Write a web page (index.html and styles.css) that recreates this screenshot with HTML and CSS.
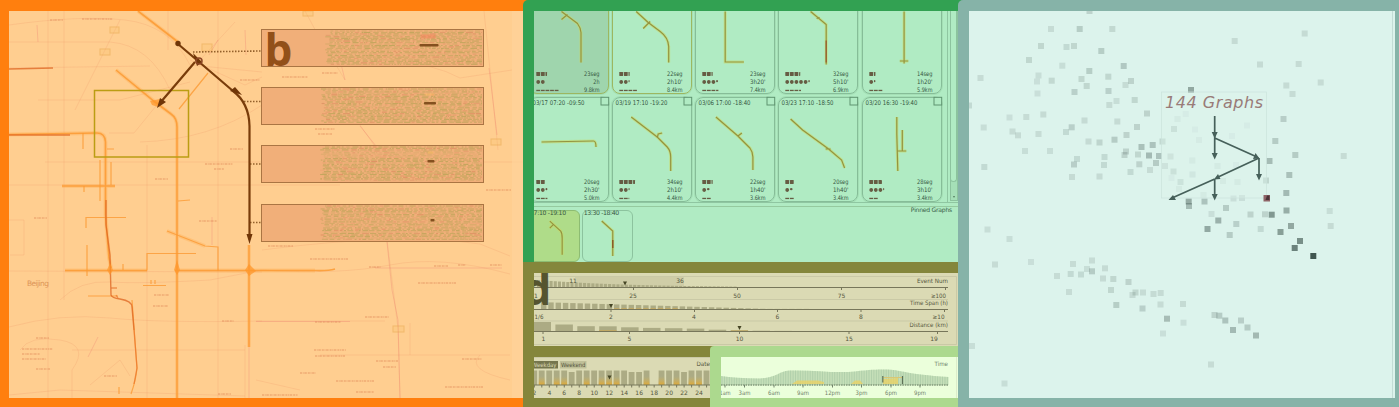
FILE: index.html
```html
<!DOCTYPE html>
<html lang="en">
<head>
<meta charset="utf-8">
<title>Traffic jam graphs</title>
<link rel="stylesheet" href="styles.css">
</head>
<body>
<main class="dashboard">
  <section class="panel map-panel">
    <svg class="canvas" viewBox="9 11 514 387">
      <g class="roads-faint">
        <path d="M9 25Q80 15 125 20T190 65L262 72M9 42H110Q150 45 170 90M9 68L150 66M38 100H120L190 82M45 162H523M9 185H340M48 11V398M64 11V300M120 20L75 110M168 11V50M147 145V398M218 11V398M9 271L262 272M9 327Q60 313 110 318T262 321M72 350H245M9 395L60 390 245 396M245 345V398M109 133H134L156 106M190 60L245 85 262 77M140 142Q210 140 262 105M60 300Q80 280 110 282T210 280L262 270Q340 275 390 265T510 274M262 250Q400 232 480 244L510 256M256 321H385M320 355H510M256 380L300 390M410 323V355M9 220H24V255H10M200 60L235 22M20 350Q30 335 60 340T72 370V398M305 11L318 35 345 80M360 125L388 165M387 240L398 328 400 398M484 11L490 70 498 150M262 60Q410 50 460 78L512 70M90 385L120 360 130 376M480 355Q465 370 510 380"/>
      </g>
      <g class="roads-red">
        <path d="M340 60L345 80M360 126L376 146M387 242L392 290 398 320 400 398M489 68L497 135M256 321.500H350M375 268H502M212 217V245M249 340V398M245 30L246 55M209 55L218 40M37 25L38 42M88 357L98 337"/>
      </g>
      <text class="city" x="27" y="286" textLength="22">Beijing</text>
      <g id="map-marks"></g>
      <g class="places">
        <rect x="110" y="27" width="9" height="6"/><rect x="100" y="49" width="10" height="6"/><rect x="202" y="44" width="10" height="7"/><rect x="393" y="326" width="11" height="6"/><rect x="491" y="139" width="10" height="6"/><rect x="303" y="11" width="10" height="5"/>
      </g>
      <g class="road glow">
        <path d="M138 11L178 42M116 70L155 102 171 114Q177 118 177 127V398M9 134.500L97 133Q105 133 105.500 142V215L109 258 111 268M62 186H115M65 270.500H147M175 270.500H315M249 245V347M167 231L205 246"/>
      </g>
      <g class="road">
        <path d="M138 11L178 42M116 70L155 102 171 114Q177 118 177 127V398M9 134.500L97 133Q105 133 105.500 142V215L109 258 111 268M62 186H115M65 270.500H147M175 270.500H315Q328 271 335 269M249 245V347"/>
      </g>
      <g class="road thin">
        <path d="M147 270.500V253.500H196M167 231L205 246 218 247V271M87 245V276M86 228V217.500H126M179 109L208 73M132 300L137 368Q136 380 131 394M88 296H118M143 285.500H166M151 284V280M155 284V280M84 186V192M100 160V201M111 162V185M83 133V149M107 149H114M119 394V387M178 201L190 200M123 270V264"/>
      </g>
      <path class="road-deep" d="M9 69L53 68M9 135H70M106 200V225L110 255 111 295Q112 298 120 299 132 301 132 307L134 330"/>
      <path class="road-warm" d="M134 330L137 368 134 384M111 288H117M116 295L118 298"/>
      <path class="hot" d="M150 101L160 99 158 107 152 105ZM177 260L180 270 177 275 174 270ZM245 270L249 264 256 271 249 276ZM110 263L113 270 110 275 107 270Z"/>
      <rect class="selection" x="94.500" y="90.500" width="94" height="66.500"/>
      <g class="leader">
        <path d="M193 52L261 51M244 101.500H261M250 164H261M250 222.500H261"/>
      </g>
      <path class="route" d="M178 44L198 61 233 91Q249 103 249.500 126V238M195 62L160 103"/>
      <path class="route-tip" d="M157 108L160 98 166 102ZM242 95L230 91 235 87ZM246.500 234H252.500L249.500 244ZM193 53L202 62 197 66Z"/>
      <circle class="route-tip" cx="178" cy="43.500" r="2.700"/>
      <circle class="route-node" cx="199" cy="61" r="3"/>
      <g id="timelines"></g>
      <text class="letter letter-b" x="264.500" y="66">b</text>
      <path d="M512 11H523V398H512Z" fill="#ffd49d" opacity=".6"/>
    </svg>
  </section>

  <div class="middle">
    <section class="panel list-panel">
      <div class="list-row">
        <div class="cards" id="cards"></div>
        <div class="scrollbar"><span class="thumb"></span><span class="arrow"></span></div>
      </div>
      <div class="pinned">
        <div class="pin-card is-active">
          <svg viewBox="528 210 52 52"><text x="529" y="215" textLength="36.500">17:10 -19:10</text><path class="g-halo" d="M549 221L560 231Q561.500 233 561.500 238V255M549 228L553 224"/><path class="g-line" d="M549 221L560 231Q561.500 233 561.500 238V255M549 228L553 224"/></svg>
        </div>
        <div class="pin-card">
          <svg viewBox="581.500 210 51 52"><text x="583" y="215" textLength="35.500">13:30 -18:40</text><path class="g-halo" d="M601 221L612 231V256"/><path class="g-line" d="M601 221L612 231V256"/><path d="M612 240V248" stroke="#8a5a28" stroke-width="1.500"/></svg>
        </div>
        <span class="pinned-title">Pinned Graphs</span>
      </div>
    </section>

    <section class="panel filter-panel">
      <div class="filters"><svg viewBox="534 273 424 73" id="filters"></svg></div>
      <div class="filter-bottom">
        <div class="date"><svg viewBox="534 357 176 41" id="dates"></svg></div>
        <div class="time"><svg viewBox="721 357 237 41" id="times"></svg></div>
      </div>
    </section>
  </div>

  <section class="panel scatter-panel">
    <svg class="canvas" viewBox="969 11 426 387">
      <path d="M1392.500 11V398" stroke="#c3ddd6"/>
      <g id="points"></g>
      <rect class="hint" x="1161.500" y="92" width="105" height="106"/>
      <text class="graphs-title" x="1165" y="108" textLength="98">144 Graphs</text>
      <g class="arrows">
        <path d="M1214.700 116V154M1214.700 138L1257 157M1259 158V176M1259 158L1216 178M1214.700 179L1172 198M1214.700 179V196"/>
        <path class="tip" d="M1211.700 132H1217.700L1214.700 138.500ZM1211.700 153H1217.700L1214.700 159.500ZM1256 174H1262L1259 180.500ZM1211.700 194H1217.700L1214.700 200.500ZM1255.500 153L1259.500 158.500 1253 159ZM1218 174L1220.500 179 1214 179.500ZM1173 195L1176 200 1168.500 200Z"/>
      </g>
      <path d="M1263.500 195H1270V201.500H1263.500Z" fill="#8f6467"/><path d="M1267 195.500H1269.500V200H1265.500Z" fill="#4c3438"/>
    </svg>
  </section>
</main>
<script src="script.js"></script>
</body>
</html>
```

FILE: styles.css
```css
* { box-sizing: border-box; }

body {
  margin: 0;
  width: 1399px;
  height: 407px;
  overflow: hidden;
  background: #ff7f0e;
  font-family: "DejaVu Sans", sans-serif;
}

svg { display: block; width: 100%; height: 100%; }

.dashboard {
  display: grid;
  grid-template-columns: 523px 435px 441px;
  height: 407px;
}

.panel { overflow: hidden; }

.map-panel { padding: 11px 0 9px 9px; background: #ff7f0e; }
.map-panel .canvas { background: #ffce90; }

.roads-faint path { fill: none; stroke: #e88a60; stroke-width: .8; opacity: .24; }
.roads-red path { fill: none; stroke: #e8746a; stroke-width: 1; opacity: .28; }
.city { font-size: 7.5px; fill: #cf7d42; opacity: .7; }
.places rect { fill: #f8c05e; fill-opacity: .4; stroke: #e7a548; opacity: .5; }
.road path { fill: none; stroke: #fb9a33; stroke-width: 1.6; opacity: .85; }
.road.thin path { stroke-width: 1.2; opacity: .8; }
.road.glow path { stroke: #ffa43d; stroke-width: 3.800; opacity: .28; }
.road-deep { fill: none; stroke: #dd6420; stroke-width: 1.400; opacity: .75; }
.road-warm { fill: none; stroke: #e8702a; stroke-width: 1.300; opacity: .65; }
.hot { fill: #ff9528; opacity: .7; }
.selection { fill: none; stroke: #bb9d13; stroke-width: 1.500; }
.leader path { fill: none; stroke: #93602a; stroke-width: 1.600; stroke-dasharray: 1.500 1.500; }
.route { fill: none; stroke: #793c0a; stroke-width: 2.200; }
.route-tip { fill: #703608; }
.route-node { fill: none; stroke: #8b4524; stroke-width: 1.500; }
.timeline { fill: #f1af79; stroke: #aa7543; stroke-width: 1; }
.letter { font-family: "Open Sans", "Noto Sans", sans-serif; font-weight: 700; font-size: 44px; }
.letter-b { fill: #925019; }
.letter-d { fill: #55542f; }

.middle {
  display: grid;
  grid-template-rows: 262px 145px;
  background: linear-gradient(#ff7f0e 0 180px, #84863b 180px);
}

.list-panel {
  display: grid;
  grid-template-rows: 192px 59px;
  padding: 11px 0 0 11px;
  background: #32a152;
  border-top-left-radius: 5px;
}

.list-row {
  display: flex;
  overflow: hidden;
  background: #b0ebc3;
  border-bottom: 1px solid #8fc6a1;
}

.cards {
  display: grid;
  flex: none;
  grid-template-columns: repeat(5, 80px);
  grid-auto-rows: 105px;
  gap: 3.500px 3.300px;
  margin: -22.500px 0 0 -5.500px;
  height: 214px;
  width: 419px;
  border-right: 1px solid #8fc6a1;
}

.card {
  border: 1px solid #86bd98;
  border-radius: 8px;
  box-shadow: 0 0 0 1px #a4dfb5;
}
.card.is-warm { border-color: #9cb760; }
.card.is-selected { background: #9fd5ad; }
.card svg, .pin-card svg { margin: -1px; width: calc(100% + 2px); height: calc(100% + 2px); overflow: visible; }
.card text, .pin-card text { font-size: 6.200px; fill: #35563f; }
.card .title { font-size: 6.400px; }
.marks { fill: #665c43; }
.checkbox { fill: #b0ebc3; stroke: #5f9470; stroke-width: 1; }
.g-halo { fill: none; stroke: #cbd860; stroke-width: 3; opacity: .55; }
.g-line { fill: none; stroke: #94933f; stroke-width: 1.200; }

.scrollbar {
  display: flex;
  flex-direction: column;
  align-items: center;
  justify-content: space-between;
  width: 8px;
  margin-left: 2px;
  height: 190px;
  padding-bottom: 1px;
  border: 1px solid #8cc39e;
  border-top: 0;
  background: #a5dfb7;
}
.thumb { width: 7px; height: 171px; background: #b0ebc3; border: 1px solid #8cc39e; border-top: 0; border-radius: 0 0 4px 4px; }
.arrow { border: 1.500px solid transparent; border-top: 2px solid #547c60; }

.pinned {
  display: flex;
  gap: 1.500px;
  padding-top: 6.500px;
  overflow: hidden;
  background: linear-gradient(#b0ebc3 3px, #95ca9f 3px 4px, #b0ebc3 4px);
}
.pin-card { flex: none; width: 51.500px; height: 52px; border: 1px solid #8cc39e; border-radius: 6px; }
.pin-card.is-active { margin-left: -5.500px; background: #afdc89; border-color: #8dbc72; }
.pinned-title {
  margin: -4px 6px 0 auto;
  font-size: 6.100px;
  line-height: 8px;
  color: #3a5f47;
  height: 8px;
  white-space: nowrap;
  letter-spacing: -.25px;
}

.filter-panel {
  display: grid;
  grid-template-rows: 73px 61px;
  padding: 11px 0 0 11px;
  background: #84863b;
  border-top-left-radius: 7px;
}
.filters { background: #dbdab4; }
.filter-bottom { display: grid; grid-template-columns: 176px 248px; }
.date { height: 41px; margin-top: 11px; background: #dbdab4; }
.time { padding: 11px 0 9px 11px; background: #acd98e; border-top-left-radius: 4px; }
.time svg { background: #ebffdb; }
.tick-label { font-size: 6px; fill: #55563d; text-anchor: middle; }
.caption { font-size: 6px; fill: #55563d; }
.axis { stroke: #77765a; stroke-width: 1; fill: none; }
.rule { stroke: #c3c2a1; stroke-width: .7; fill: none; }
.bar { fill: #acab84; }
.bar-warm { fill: #c9a959; }
.pointer { fill: #454524; }
.badge { fill: #74754d; }
.badge-light { fill: #bfbf98; }
.badge-text { font-size: 6px; fill: #d9d8b2; }
.time .tick-label, .time .caption { fill: #71836a; }
.area { fill: #c5dfb8; }
.area-lines { stroke: #a3c6a2; stroke-width: .6; fill: none; }
.jam { fill: #e8d266; opacity: .8; }
.bracket { stroke: #5e7157; stroke-width: 1.200; fill: none; }

.scatter-panel {
  padding: 11px 4px 9px 11px;
  background: #86b3a8;
  border-top-left-radius: 5px;
}
.scatter-panel .canvas { background: #dcf3ec; }
.graphs-title { font-size: 16px; font-style: italic; fill: #997b78; }
.hint { fill: #dcf3ec; fill-opacity: .35; stroke: #cbe3dc; stroke-width: .7; }
.arrows path { fill: none; stroke: #46605a; stroke-width: 1.700; }
.arrows .tip { fill: #46605a; stroke: none; }

.dashboard { background: linear-gradient(90deg, transparent 940px, #32a152 940px); }
```

FILE: script.js
```js
let seed = 7;
const rand = () => (seed = (seed * 16807) % 2147483647) / 2147483647;
const byId = (id) => document.getElementById(id);

/* Timeline strips over the map: speed rows drawn as noisy dashes */
let strips = '';
[[29.5, 325, 429, 45.5, 19], [87.5, 321, 430, 103.5, 12], [145.5, 320, 431, 161.5, 7], [204.5, 320, 432.5, 220.5, 4]].forEach(([y, start, cx, cy, w], i) => {
  strips += `<rect class="timeline" x="261.500" y="${y}" width="222" height="37"/>`;
  for (let r = 1.5; r < 36; r += 1.45) {
    const density = rand() > .25 ? .32 : .1;
    for (let x = start + rand() * 6; x < 481; x += .5 + rand() * 2.5) {
      const len = Math.min(1 + rand() * 6, 482 - x);
      const tone = rand() > .12 ? '#a6a04a' : '#d38257';
      strips += `<path d="M${x.toFixed(1)} ${(y + r).toFixed(1)}h${len.toFixed(1)}" stroke="${tone}" stroke-width="1.100" opacity="${(density + rand() * .28).toFixed(2)}"/>`;
      x += len;
    }
  }
  if (i < 3) strips += `<path d="M${cx - w * .45} ${cy - 9}h${w * .8}" stroke="${i ? '#ffbe65' : '#f4805a'}" stroke-width="${i ? 2 : 4}" opacity=".5"/>`;
  strips += `<rect x="${cx - w / 2}" y="${cy - 1.5}" width="${w}" height="2.600" rx=".8" fill="#84501f"/>`;
});
byId('timelines').innerHTML = strips;

/* Small unlabelled place marks */
byId('map-marks').innerHTML = [[50, 20, 13], [82, 19, 31], [22, 349, 31], [22, 354, 18], [22, 359, 24], [36, 338, 13], [36, 369, 14], [104, 376, 13], [34, 218, 13], [199, 221, 18], [222, 321, 12], [154, 295, 15], [153, 306, 15], [218, 394, 13], [205, 164, 28], [214, 169, 10], [230, 149, 13], [240, 80, 20], [155, 179, 13], [282, 77, 26], [322, 73, 16], [315, 129, 20], [318, 134, 14], [310, 259, 39], [365, 317, 24], [418, 283, 38], [315, 322, 26], [314, 350, 32], [315, 356, 30], [376, 361, 22], [383, 367, 13], [336, 381, 38], [356, 392, 18], [445, 387, 39], [462, 359, 20], [300, 373, 16], [262, 395, 36], [486, 190, 25], [268, 246, 25], [434, 266, 14], [458, 265, 8], [490, 265, 12], [369, 267, 12]]
  .map(([x, y, w]) => `<path d="M${x} ${y}h${w}" stroke="#df8556" stroke-width="2" stroke-dasharray="2 .7 1 .6 2.500 1" opacity=".36"/>`).join('');

/* Graph cards */
const cards = [
  { s: [2.4, 2, 5], t: ['23seg', '2h', '9.8km'], d: 'M561 11L577 23Q580 27 580.500 32V62M561 19L567 14', c: 'is-warm is-selected' },
  { s: [2.3, 2.3, 4], t: ['22seg', "2h10'", '8.4km'], d: 'M636 11L648 22 660 31Q668 37 668.500 46V62M643 28L650 21', c: 'is-warm' },
  { s: [2.3, 3.5, 3.6], t: ['23seg', "3h20'", '7.4km'], d: 'M725.300 11V61.500H744' },
  { s: [3.3, 5.4, 3.5], t: ['32seg', "5h10'", '6.9km'], d: 'M811 11L826.600 24V64M817 18L820 17', hot: 'M826.600 40V62' },
  { s: [1.4, 1.4, 3], t: ['14seg', "1h20'", '5.9km'], d: 'M903.800 11V63M899.500 60.500H908' },
  { s: [2, 2.5, 2.5], t: ['20seg', "2h30'", '5.0km'], n: '03/17 07:20 -09:50', d: 'M541 142L593 141Q595.500 141 595.500 147' },
  { s: [3.5, 2.3, 2.2], t: ['34seg', "2h10'", '4.4km'], n: '03/19 17:10 -19:20', d: 'M631 117L657 137 667 147Q670.500 151 670.500 157V171M657 138L658 134 662 133' },
  { s: [2.3, 1.7, 2], t: ['22seg', "1h40'", '3.6km'], n: '03/06 17:00 -18:40', d: 'M716 117L738 136 750 148Q753 152 753 157V170M738 136L742 133' },
  { s: [2, 1.7, 2], t: ['20seg', "1h40'", '3.4km'], n: '03/23 17:10 -18:50', d: 'M791 119L803 130 829 149 842 160 845 168M826 149L831 149' },
  { s: [2.9, 3.3, 2], t: ['28seg', "3h10'", '3.4km'], n: '03/20 16:30 -19:40', d: 'M896.500 117V134L897.500 171M902 130V151M897 151H906' },
];
byId('cards').innerHTML = cards.map((card, i) => {
  const x0 = 528.5 + (i % 5) * 83.3;
  const y0 = i < 5 ? -11.5 : 97;
  let marks = '';
  card.s.forEach((count, row) => {
    for (let k = 0; k < count; k++) {
      const part = Math.min(1, count - k);
      const x = x0 + 7.3 + k * 4.6;
      const y = y0 + 84.8 + row * 8;
      if (row === 2) marks += `<rect x="${x}" y="${y}" width="${3.8 * part}" height="1.300"/>`;
      else marks += `<rect x="${x}" y="${y - 1.7}" width="${3.8 * part}" height="${row && part < 1 ? 2.2 : 3.8}" rx="${row ? 1.8 : .4}"/>`;
    }
  });
  const stats = card.t.map((t, row) => `<text x="${x0 + 70.5 - t.length * 3.1}" y="${y0 + 87 + row * 8}" textLength="${t.length * 3.1}" lengthAdjust="spacingAndGlyphs">${t}</text>`).join('');
  const head = card.n ? `<text class="title" x="${x0 + 3.5}" y="${y0 + 8}" textLength="52" lengthAdjust="spacingAndGlyphs">${card.n}</text>` : '';
  return `<div class="card ${card.c || ''}"><svg viewBox="${x0} ${y0} 80 105">
    <path class="g-halo" d="${card.d}"/><path class="g-line" d="${card.d}"/>${card.hot ? `<path d="${card.hot}" stroke="#985b31" stroke-width="1.300"/>` : ''}
    ${head}<rect class="checkbox" x="${x0 + 72}" y="${y0 + .3}" width="7.700" height="7.700"/><g class="marks">${marks}</g>${stats}</svg></div>`;
}).join('');

/* Histogram filters */
const label = (x, y, t, w) => `<text class="tick-label" x="${x}" y="${y}"${w ? ` textLength="${w}" lengthAdjust="spacingAndGlyphs"` : ''}>${t}</text>`;
const caption = (x, y, t, w) => `<text class="caption" x="${x}" y="${y}" textLength="${w}" lengthAdjust="spacingAndGlyphs">${t}</text>`;
const pointer = (x, y) => `<path class="pointer" d="M${x - 2} ${y}h4l-2 4z"/>`;
const bar = (x, base, w, h, cls = 'bar') => `<rect class="${cls}" x="${x}" y="${base - h}" width="${w}" height="${h}"/>`;

let f = '<path class="rule" d="M534 276.500H956.500V344.500H534M534 299.500H948M534 321H948"/><rect x="575" y="277" width="109" height="10" fill="#cfcda7"/>';
for (let i = 0; i < 48; i++) f += bar(537 + i * 4.18, 287.5, 3.1, Math.max(.8, 7.5 * Math.exp(-i / 22)));
for (let i = 0; i < 37; i++) f += bar(541 + i * 7.3, 309.5, 5.4, Math.max(.6, 7.3 - i * .22));
for (let i = 10; i < 19; i++) f += bar(541 + i * 7.3, 309.5, 5.4, 1.2, 'bar-warm');
[9.5, 7, 5.3, 5.2, 4.2, 3.6, 3.3, 2.9, 1.8, 1.3, .8, .6].forEach((h, i) => { f += bar(533.5 + i * 21.9, 331.5, 17.5, h); });
f += bar(599, 331.5, 17.5, 1.2, 'bar-warm') + bar(731, 331.5, 17, 1, 'bar-warm');
f += '<path class="axis" d="M534 287.500H948M633.500 287.500V290M737.500 287.500V290M841.500 287.500V290M945.500 287.500V290M534 309.500H948M611 309.500V312M694.500 309.500V312M777.500 309.500V312M861 309.500V312M944.500 309.500V312M534 331.500H948M543 331.500V334M629.500 331.500V334M739.500 331.500V334M849 331.500V334M937.500 331.500V334"/>';
[[573, 283, '11'], [680, 283, '36'], [633, 297.5, '25'], [737, 297.5, '50'], [841.5, 297.5, '75'], [938.5, 297.5, '≥100', 15], [536, 297.5, '1'],
 [539, 319, '1/6', 9], [611, 319, '2'], [694, 319, '4'], [777.5, 319, '6'], [861, 319, '8'], [938.5, 319, '≥10', 12],
 [543.5, 341.3, '1'], [629.5, 341.3, '5'], [739.5, 341.3, '10'], [849, 341.3, '15'], [934, 341.3, '19']].forEach((a) => { f += label(...a); });
f += caption(917, 283, 'Event Num', 31) + caption(910, 305.3, 'Time Span (h)', 38) + caption(909.5, 327, 'Distance (km)', 38.5);
f += pointer(625, 281.5) + pointer(611, 304) + pointer(739.5, 326);
f += '<text class="letter letter-d" x="523.500" y="305">d</text>';
byId('filters').innerHTML = f;

/* Day-of-month histogram */
let d = '<defs><linearGradient id="warm" x2="0" y2="1"><stop offset=".2" stop-color="#c9b56a" stop-opacity="0"/><stop offset=".9" stop-color="#d9ab43"/></linearGradient></defs><path class="rule" d="M534 357.500H710"/>';
for (let day = 2; day <= 25; day++) {
  const x = 549.3 + (day - 4) * 7.49 - 3;
  const h = day === 18 ? 0 : [7, 15, 16, 22].includes(day) ? 13 : 14.5;
  d += bar(x, 385, 5.8, h);
  if ([3, 5, 6, 9, 11, 12, 13, 17, 19, 21, 23, 24].includes(day)) d += `<rect x="${x}" y="374" width="5.800" height="11" fill="url(#warm)"/>`;
  d += `<path class="axis" d="M${x + 3} 385v2.500"/>`;
  if (day % 2 === 0) d += label(x + 3, 394.7, day);
}
d += '<path class="axis" d="M534 385H710"/><rect class="badge" x="530" y="361" width="28" height="7.500"/><rect class="badge-light" x="560" y="361" width="26.500" height="7.500"/>';
d += '<text class="badge-text" x="532" y="366.800" textLength="24.500" lengthAdjust="spacingAndGlyphs">Weekday</text>' + caption(561, 366.8, 'Weekend', 24.5) + caption(696.5, 366.3, 'Date', 13.5) + pointer(609.5, 375.5);
byId('dates').innerHTML = d;

/* Time-of-day area */
const curve = 'M721 376Q735 378 760 378.500C780 377 778 370.500 792 370.500C815 370 835 373.500 855 371.500S880 369.500 891 369.700C905 371 905 374 948.500 377V385H721Z';
let lines = '';
for (let x = 722; x < 949; x += 2.45) lines += `M${x.toFixed(1)} 368V385`;
let t = `<clipPath id="under"><path d="${curve}"/></clipPath><path class="area" d="${curve}"/>
  <path class="area-lines" clip-path="url(#under)" d="${lines}"/>
  <path class="jam" d="M792 384L797 380.500H818L824 382V384ZM851 384L855 380.500H860L863 384ZM883 384V379L898 378V384Z"/>
  <path d="M721 385H948.500" stroke="#83997b" stroke-width="1.500" stroke-dasharray="1.600 .85"/><path d="M956.500 357V398" stroke="#dceccb"/>
  <path d="M883 377.500H902" stroke="#d8c775"/><path class="bracket" d="M882.800 376V382.500M902.500 376V384"/>`;
[[725, '1am', 11], [744.5, '3am', 12], [774, '6am', 12], [803, '9am', 12], [832.5, '12pm', 15.5], [861.5, '3pm', 12], [891, '6pm', 12], [920, '9pm', 12]].forEach(([x, s, w]) => { t += label(x, 394.7, s, w) + `<path d="M${x} 385v2.500" stroke="#71836a"/>`; });
t += caption(934.5, 366.3, 'Time', 13.5);
byId('times').innerHTML = t;

/* Projection scatter: x, y, opacity */
const pts = [
  [1089.500,11,.2],[1051,29,.14],[1079.700,29,.24],[1112.300,29,.17],[1041,46,.18],[1066.500,47,.16],[1074,46,.18],[1101.300,51,.24],[1029,60,.18],[1062.300,65.700,.13],[1123.700,66,.27],[1089.300,71,.24],[1038.500,75.500,.13],[1037,81.500,.12],[1051.700,80.700,.17],[1081.500,79,.18],[1086.700,86,.18],[1108.300,76.700,.18],[1131,81,.2],[1125.500,85,.14],[1108.500,91,.22],[1074.500,92,.22],[1037.500,93.500,.12],[980.500,78,.14],[969,105.500,.16],[1116.500,101,.13],[1109.300,105,.15],[1134.700,100,.18],[1147,113.500,.2],[1043.300,114.500,.15],[1026.300,117,.14],[1009.500,117.500,.12],[983.700,127.500,.13],[1012.500,131.500,.14],[1018,135.300,.15],[1038.500,134,.14],[1084.500,120.500,.15],[1117.300,121.500,.15],[1071.700,127.300,.22],[1066,132,.16],[1137,127,.2],[1126.500,135,.2],[1114.500,139.700,.25],[1088.500,141.500,.15],[1099.500,142.500,.19],[1025,151,.13],[1050,151,.13],[984.300,167,.16],[1077,159,.16],[1074,164.500,.23],[1072,177,.15],[1104.500,157,.16],[1104,165,.16],[1099.500,176.500,.15],[1126,151.500,.2],[1124.500,155,.2],[1138,154.500,.18],[1141.500,147,.32],[1152.700,145,.3],[1162.500,141.500,.17],[1149,155.500,.36],[1159,156,.3],[1156,163,.25],[1139.300,164.300,.2],[1130.500,172,.16],[1150,170,.14],[1165,166,.15],[1173.500,171.500,.18],[1170.500,156.500,.14],[1174,129,.18],[1191,90,.48],[1177.500,119,.08],[1185.700,114,.06],[1195,129.500,.06],[1199,140,.07],[1247,125.500,.06],[1232,136,.06],[1192.300,160.500,.08],[1192.500,174.500,.11],[1217.500,166,.08],[1223,181,.08],[1237.500,182,.08],[1236,165,.06],[1180.500,182,.16],[1179,189,.08],[1171.500,178,.06],[1188.700,201.500,.45],[1204.500,201.500,.3],[1203.500,195,.08],[1233.500,198.500,.12],[1242,198,.12],[1266,180.500,.18],[1234.700,41,.15],[1304.700,33.500,.15],[1260,64.500,.15],[1298.700,64,.15],[1286.300,85.500,.15],[1320.700,82.500,.14],[1292.500,94,.14],[1283.500,119,.23],[1275.300,141,.25],[1295.300,155,.25],[1343.700,156,.14],[1269.500,161,.35],[1289.300,175,.32],[1286.300,193,.36],
  [1189,206,.35],[1226,208,.25],[1211.500,214,.12],[1218.300,220.500,.42],[1236.300,224,.22],[1207.500,229,.47],[1229.700,235,.25],[1250.500,214.500,.2],[1265,214.300,.2],[1271.700,214.700,.58],[1260.700,229,.16],[1286.500,210.500,.44],[1291,226,.48],[1280.500,232,.54],[1300,241,.64],[1294.700,248,.72],[1313.300,256,1],[1329.700,211,.13],[1330.700,226,.15],[987.500,229.500,.13],[1009.500,239,.13],[1031,262,.12],[995,264.500,.14],[1057,276,.14],[1073,264,.14],[1092,260.500,.14],[1070.700,274,.16],[1081,274.500,.16],[1087,269,.13],[1092,271.300,.25],[1105,268.300,.15],[1103,278.500,.15],[1113.300,279,.18],[1128.500,282,.2],[1069,292,.14],[1111,290,.18],[1135.500,292.500,.18],[1132.500,295,.15],[1143,292.500,.14],[1153.500,294,.15],[1160.700,293,.15],[1116.300,305,.24],[1142.500,308.500,.22],[1160.500,304.500,.14],[1183,304,.15],[1167,318.700,.34],[1183.500,322.700,.12],[1163,333.500,.12],[1214.500,315,.2],[1219.300,315.700,.25],[1225.300,320.500,.3],[1241,320.500,.23],[1247.500,327.500,.25],[1233,330,.36],[1256,335.500,.37],[972,346,.13],[1211,364.500,.14],[1004.500,383.500,.13],
];
byId('points').innerHTML = pts.map(([x, y, o]) => `<rect x="${x - 3}" y="${y - 3}" width="6" height="6" fill="#405650" opacity="${o}"/>`).join('');
```
